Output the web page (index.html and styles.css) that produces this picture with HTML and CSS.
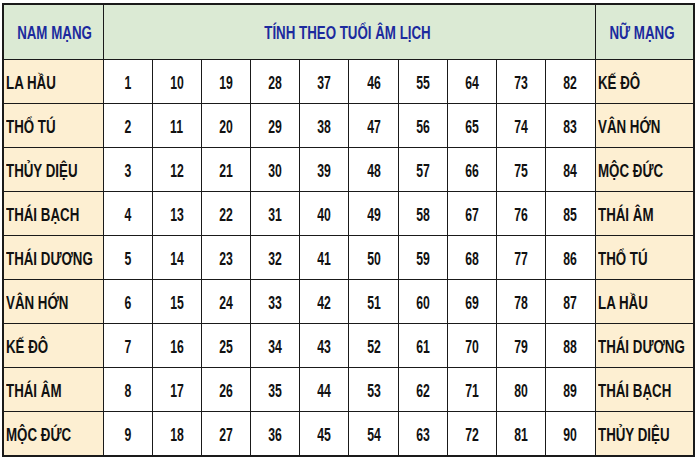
FILE: index.html
```html
<!DOCTYPE html>
<html lang="vi">
<head>
<meta charset="utf-8">
<link rel="stylesheet" href="styles.css">
</head>
<body>
<div class="wrap">
<table class="sao">
  <colgroup>
    <col class="c-name">
    <col class="c-num"><col class="c-num"><col class="c-num"><col class="c-num"><col class="c-num">
    <col class="c-num"><col class="c-num"><col class="c-num"><col class="c-num"><col class="c-num">
    <col class="c-name2">
  </colgroup>
  <thead>
    <tr class="head">
      <th><span class="t">NAM MẠNG</span></th>
      <th colspan="10"><span class="t">TÍNH THEO TUỔI ÂM LỊCH</span></th>
      <th><span class="t">NỮ MẠNG</span></th>
    </tr>
  </thead>
  <tbody>
    <tr><td class="name"><span class="t">LA HẦU</span></td><td><span class="n">1</span></td><td><span class="n">10</span></td><td><span class="n">19</span></td><td><span class="n">28</span></td><td><span class="n">37</span></td><td><span class="n">46</span></td><td><span class="n">55</span></td><td><span class="n">64</span></td><td><span class="n">73</span></td><td><span class="n">82</span></td><td class="name"><span class="t">KẾ ĐÔ</span></td></tr>
    <tr><td class="name"><span class="t">THỔ TÚ</span></td><td><span class="n">2</span></td><td><span class="n">11</span></td><td><span class="n">20</span></td><td><span class="n">29</span></td><td><span class="n">38</span></td><td><span class="n">47</span></td><td><span class="n">56</span></td><td><span class="n">65</span></td><td><span class="n">74</span></td><td><span class="n">83</span></td><td class="name"><span class="t">VÂN HỚN</span></td></tr>
    <tr><td class="name"><span class="t">THỦY DIỆU</span></td><td><span class="n">3</span></td><td><span class="n">12</span></td><td><span class="n">21</span></td><td><span class="n">30</span></td><td><span class="n">39</span></td><td><span class="n">48</span></td><td><span class="n">57</span></td><td><span class="n">66</span></td><td><span class="n">75</span></td><td><span class="n">84</span></td><td class="name"><span class="t">MỘC ĐỨC</span></td></tr>
    <tr><td class="name"><span class="t">THÁI BẠCH</span></td><td><span class="n">4</span></td><td><span class="n">13</span></td><td><span class="n">22</span></td><td><span class="n">31</span></td><td><span class="n">40</span></td><td><span class="n">49</span></td><td><span class="n">58</span></td><td><span class="n">67</span></td><td><span class="n">76</span></td><td><span class="n">85</span></td><td class="name"><span class="t">THÁI ÂM</span></td></tr>
    <tr><td class="name"><span class="t">THÁI DƯƠNG</span></td><td><span class="n">5</span></td><td><span class="n">14</span></td><td><span class="n">23</span></td><td><span class="n">32</span></td><td><span class="n">41</span></td><td><span class="n">50</span></td><td><span class="n">59</span></td><td><span class="n">68</span></td><td><span class="n">77</span></td><td><span class="n">86</span></td><td class="name"><span class="t">THỔ TÚ</span></td></tr>
    <tr><td class="name"><span class="t">VÂN HỚN</span></td><td><span class="n">6</span></td><td><span class="n">15</span></td><td><span class="n">24</span></td><td><span class="n">33</span></td><td><span class="n">42</span></td><td><span class="n">51</span></td><td><span class="n">60</span></td><td><span class="n">69</span></td><td><span class="n">78</span></td><td><span class="n">87</span></td><td class="name"><span class="t">LA HẦU</span></td></tr>
    <tr><td class="name"><span class="t">KẾ ĐÔ</span></td><td><span class="n">7</span></td><td><span class="n">16</span></td><td><span class="n">25</span></td><td><span class="n">34</span></td><td><span class="n">43</span></td><td><span class="n">52</span></td><td><span class="n">61</span></td><td><span class="n">70</span></td><td><span class="n">79</span></td><td><span class="n">88</span></td><td class="name"><span class="t">THÁI DƯƠNG</span></td></tr>
    <tr><td class="name"><span class="t">THÁI ÂM</span></td><td><span class="n">8</span></td><td><span class="n">17</span></td><td><span class="n">26</span></td><td><span class="n">35</span></td><td><span class="n">44</span></td><td><span class="n">53</span></td><td><span class="n">62</span></td><td><span class="n">71</span></td><td><span class="n">80</span></td><td><span class="n">89</span></td><td class="name"><span class="t">THÁI BẠCH</span></td></tr>
    <tr><td class="name"><span class="t">MỘC ĐỨC</span></td><td><span class="n">9</span></td><td><span class="n">18</span></td><td><span class="n">27</span></td><td><span class="n">36</span></td><td><span class="n">45</span></td><td><span class="n">54</span></td><td><span class="n">63</span></td><td><span class="n">72</span></td><td><span class="n">81</span></td><td><span class="n">90</span></td><td class="name"><span class="t">THỦY DIỆU</span></td></tr>
  </tbody>
</table>
</div>
</body>
</html>
```
FILE: styles.css
```css
html, body {
  margin: 0;
  padding: 0;
  background: #ffffff;
}
.wrap {
  padding: 3px 0 0 2px;
}
.sao {
  border-collapse: collapse;
  table-layout: fixed;
  width: 691px;
  border: 2px solid #1a1a1a;
  font-family: "Liberation Sans", Arial, sans-serif;
  font-weight: bold;
  font-size: 18px;
  color: #111111;
}
.c-name { width: 100px; }
.c-num { width: 49.2px; }
.c-name2 { width: 99px; }
.sao th, .sao td {
  border: 1px solid #1a1a1a;
  padding: 0;
  text-align: center;
  vertical-align: middle;
  white-space: nowrap;
  overflow: hidden;
}
.t, .n {
  display: inline-block;
  transform-origin: center center;
}
.t { transform: scaleX(0.74); }
.n { transform: scaleX(0.68); }
.head th {
  height: 52px;
  background: #dbead4;
  color: #1c2a9e;
  padding: 2px 4px 0 0;
}
.sao tbody td {
  height: 40px;
  background: #ffffff;
  padding-top: 3px;
}
.sao tbody td.name {
  background: #fdefd2;
  text-align: left;
  padding-left: 2px;
}
.sao tbody td.name .t {
  transform-origin: left center;
}
```
